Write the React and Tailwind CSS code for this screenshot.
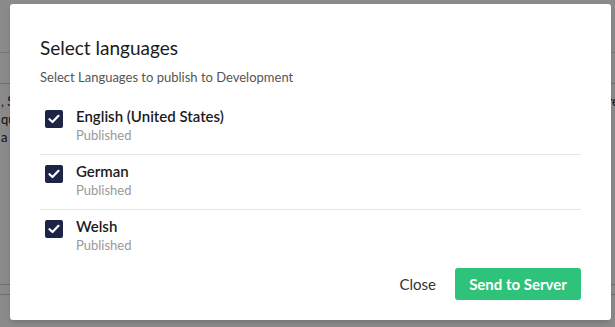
import { useState } from "react";

const languages = [
  { name: "English (United States)", status: "Published" },
  { name: "German", status: "Published" },
  { name: "Welsh", status: "Published" },
];

function CheckBox({ checked, onChange }) {
  return (
    <button
      onClick={onChange}
      className={`w-[18px] h-[18px] rounded-[2px] flex items-center justify-center shrink-0 ${
        checked ? "bg-[#1d2547]" : "bg-white border border-[#999]"
      }`}
    >
      {checked && (
        <svg width="12" height="10" viewBox="0 0 12 10" fill="none">
          <path d="M1.5 5.2 L4.5 8 L10.5 1.8" stroke="white" strokeWidth="2.2" strokeLinecap="round" strokeLinejoin="round" />
        </svg>
      )}
    </button>
  );
}

function App() {
  const [selected, setSelected] = useState([true, true, true]);

  const toggle = (i) => {
    setSelected(selected.map((v, idx) => (idx === i ? !v : v)));
  };

  return (
    <div className="relative w-[615px] h-[327px] overflow-hidden bg-white" style={{ fontFamily: "Lato, 'Noto Sans', sans-serif" }}>
      {/* page behind the dialog */}
      <div className="h-[53px] border-b border-[#ddd]"></div>
      <div className="h-[31px] border-b border-[#ccc]"></div>
      <div className="pt-[8px] text-[13px] leading-[18px] text-[#222] flex justify-between">
        <div className="pl-[1px]">
          <p>, S</p>
          <p>qu</p>
          <p>a</p>
        </div>
        <div className="-mr-[4px]">
          <p>re</p>
          <p>l</p>
        </div>
      </div>
      <div className="absolute left-0 right-0 top-[284px] border-b border-[#ccc]"></div>
      <div className="absolute left-0 right-0 top-[294px] border-b border-[#ccc]"></div>

      {/* overlay */}
      <div className="absolute inset-0 bg-black/[0.46]"></div>

      {/* dialog */}
      <div className="absolute left-[10px] top-[4px] w-[601px] h-[316px] bg-white rounded-[3px] shadow-md px-[30px] pt-[32px] flex flex-col">
        <h2 className="text-[19px] leading-[24px] text-[#1b1b1b]">Select languages</h2>
        <p className="mt-[9px] text-[13px] leading-[16px] text-[#555]">Select Languages to publish to Development</p>

        <div className="mt-[15px]">
          {languages.map((lang, i) => (
            <div
              key={lang.name}
              className={`flex items-start gap-[13px] pl-[5px] h-[55px] pt-[10px] ${
                i < languages.length - 1 ? "border-b border-[#e6e6e6]" : ""
              }`}
            >
              <CheckBox checked={selected[i]} onChange={() => toggle(i)} />
              <div className="-mt-[2px]">
                <div className="text-[15px] leading-[16px] font-semibold text-[#1b1b1b]">{lang.name}</div>
                <div className="mt-[3px] text-[13px] leading-[16px] text-[#999]">{lang.status}</div>
              </div>
            </div>
          ))}
        </div>

        <div className="mt-auto mb-[20px] flex items-center justify-end gap-[19px]">
          <button className="text-[15px] text-[#333]">Close</button>
          <button className="w-[126px] h-[32px] rounded-[3px] bg-[#2fc27a] text-white text-[15px] font-bold">
            Send to Server
          </button>
        </div>
      </div>
    </div>
  );
}

export default App;
